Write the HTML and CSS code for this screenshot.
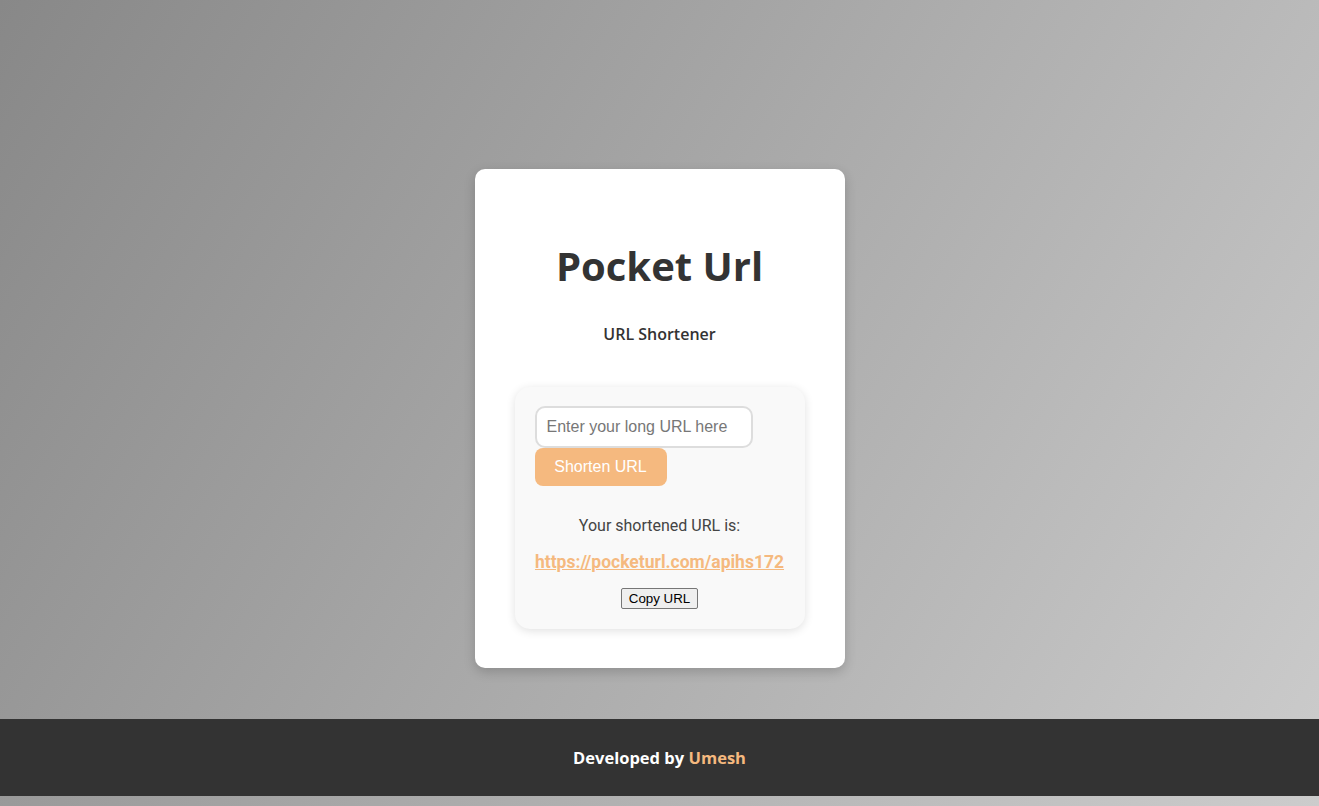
FILE: index.html
```html
<!DOCTYPE html>
<html lang="en">
<head>
<meta charset="utf-8">
<title>Pocket Url</title>
<link rel="stylesheet" href="styles.css">
</head>
<body>
<main class="main">
  <div class="card">
    <h1 class="title">Pocket Url</h1>
    <p class="subtitle">URL Shortener</p>
    <div class="panel">
      <form class="form">
        <input class="url-input" type="text" placeholder="Enter your long URL here">
        <button class="shorten-btn" type="button">Shorten URL</button>
      </form>
      <div class="result">
        <p class="result-label">Your shortened URL is:</p>
        <a class="result-link" href="#">https://pocketurl.com/apihs172</a>
        <button class="copy-btn" type="button">Copy URL</button>
      </div>
    </div>
  </div>
</main>
<footer class="footer">
  <p class="footer-text">Developed by <span class="author">Umesh</span></p>
</footer>
</body>
</html>
```
FILE: styles.css
```css
html, body {
  margin: 0;
  padding: 0;
}
body {
  min-height: 806px;
  background: linear-gradient(120deg, #888888 0%, #cccccc 100%);
  font-family: Roboto, "Liberation Sans", sans-serif;
  padding-bottom: 10px;
  box-sizing: border-box;
}
.main {
  height: 719px;
  box-sizing: border-box;
  padding-top: 169px;
  display: flex;
  align-items: flex-start;
  justify-content: center;
}
.card {
  width: 370px;
  height: 499px;
  box-sizing: border-box;
  background: #ffffff;
  border-radius: 10px;
  box-shadow: 0 4px 12px rgba(0, 0, 0, 0.18);
  padding: 71px 40px 0;
  display: flex;
  flex-direction: column;
  align-items: center;
}
.title {
  margin: 0;
  font-family: "Open Sans", "Inter", sans-serif;
  font-weight: 700;
  font-size: 40px;
  line-height: 52px;
  color: #333333;
}
.subtitle {
  margin: 31px 0 0;
  font-family: "Open Sans", sans-serif;
  font-weight: 600;
  font-size: 16px;
  line-height: 22px;
  color: #333333;
}
.panel {
  margin-top: 42px;
  width: 290px;
  box-sizing: border-box;
  background: #f9f9f9;
  border-radius: 15px;
  box-shadow: 0 2px 10px rgba(0, 0, 0, 0.12);
  padding: 19px 20px 20px;
}
.form {
  display: flex;
  flex-direction: column;
  align-items: flex-start;
  margin: 0;
}
.url-input {
  width: 218px;
  height: 42px;
  box-sizing: border-box;
  border: 2px solid #dddddd;
  border-radius: 10px;
  padding: 0 10px;
  font-family: "Liberation Sans", Arial, sans-serif;
  font-size: 16px;
  color: #333;
  background: #fff;
  outline: none;
}
.url-input::placeholder {
  color: #777777;
}
.shorten-btn {
  width: 132px;
  height: 38px;
  border: none;
  border-radius: 8px;
  background: #f5b97f;
  color: #ffffff;
  font-family: "Liberation Sans", Arial, sans-serif;
  font-size: 16px;
  padding: 0;
}
.result {
  margin-top: 30px;
  display: flex;
  flex-direction: column;
  align-items: center;
}
.result-label {
  margin: 0;
  font-size: 16px;
  line-height: 19px;
  color: #444444;
}
.result-link {
  margin-top: 17px;
  font-weight: 700;
  font-size: 17.5px;
  line-height: 21px;
  color: #f5b97f;
  text-decoration: underline;
}
.copy-btn {
  margin-top: 15px;
  font-family: "Liberation Sans", Arial, sans-serif;
  font-size: 13.333px;
  height: 21px;
  padding: 1px 7px;
  border: 1px solid #767676;
  border-radius: 2px;
  background: #efefef;
  color: #000;
}
.footer {
  height: 77px;
  background: #333333;
  display: flex;
  align-items: center;
  justify-content: center;
}
.footer-text {
  margin: 0;
  font-family: "Open Sans", sans-serif;
  font-weight: 700;
  font-size: 16.5px;
  color: #ffffff;
}
.author {
  color: #f5b97f;
}
```
